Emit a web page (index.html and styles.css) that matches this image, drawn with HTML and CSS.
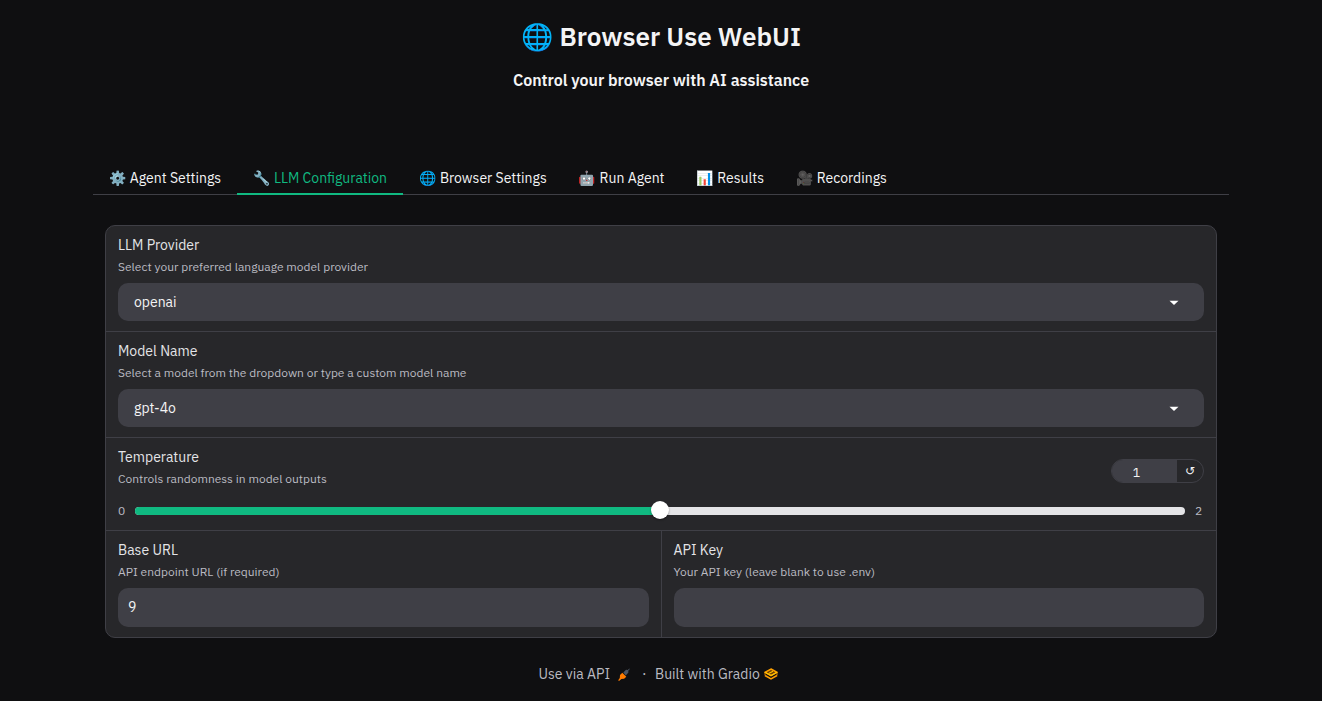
FILE: index.html
```html
<!DOCTYPE html>
<html lang="en">
<head>
<meta charset="utf-8">
<title>Browser Use WebUI</title>
<link rel="stylesheet" href="styles.css">
</head>
<body>
<header class="hero">
  <h1 class="title">🌐 Browser Use WebUI</h1>
  <h3 class="subtitle">Control your browser with AI assistance</h3>
</header>
<main class="app">
  <nav class="tabs">
    <button class="tab">⚙️ Agent Settings</button>
    <button class="tab selected">🔧 LLM Configuration</button>
    <button class="tab">🌐 Browser Settings</button>
    <button class="tab">🤖 Run Agent</button>
    <button class="tab">📊 Results</button>
    <button class="tab">🎥 Recordings</button>
  </nav>
  <section class="panel">
    <div class="block">
      <label class="label">LLM Provider</label>
      <p class="info">Select your preferred language model provider</p>
      <div class="select"><span>openai</span><svg viewBox="0 0 10 6"><path d="M.5.700h9L5 5z" fill="#fff"/></svg></div>
    </div>
    <div class="block">
      <label class="label">Model Name</label>
      <p class="info">Select a model from the dropdown or type a custom model name</p>
      <div class="select"><span>gpt-4o</span><svg viewBox="0 0 10 6"><path d="M.5.700h9L5 5z" fill="#fff"/></svg></div>
    </div>
    <div class="block block-slider">
      <div class="slider-head">
        <div><label class="label">Temperature</label><p class="info">Controls randomness in model outputs</p></div>
        <div class="number"><span class="number-value">1</span><button class="reset">↺</button></div>
      </div>
      <div class="slider"><span class="bound">0</span><div class="track"><div class="fill"></div><div class="thumb"></div></div><span class="bound">2</span></div>
    </div>
    <div class="row">
      <div class="block"><label class="label">Base URL</label><p class="info">API endpoint URL (if required)</p><div class="input">9</div></div>
      <div class="block"><label class="label">API Key</label><p class="info">Your API key (leave blank to use .env)</p><div class="input"></div></div>
    </div>
  </section>
</main>
<footer class="footer">
  <span class="f-api">Use via API</span>
  <svg class="rocket" viewBox="0 0 12 13"><path d="M5.300 4.500 8 1.800l1.800.1L11.300.6l.5.500-1.500 1.600.1 1.800L7.800 7.500z" fill="#4b5563"/><path d="m4.300 4.700 4 4-2.200 2.100-2.700.1L1 13l-.8-.7L1.800 10l.2-3z" fill="#ff7c00"/></svg>
  <span class="dot">·</span>
  <span class="f-built">Built with Gradio</span>
  <svg class="gradio" viewBox="0 0 14 12"><path d="M7 1 13 4.300 7 7.600 1 4.300z" fill="#6b3d05" stroke="#ffa000" stroke-width="1.500"/><path d="M1 7.500 7 10.900l6-3.400" fill="none" stroke="#ff9d00" stroke-width="1.600"/><path d="M1 4.300v3.200m12-3.200v3.200" fill="none" stroke="#d97b00"/><path d="M1 4.300 7 7.600l6-3.300M5 5.200 9 3.300" fill="none" stroke="#ffc400" stroke-width="1.100"/></svg>
</footer>
</body>
</html>
```
FILE: styles.css
```css
* { box-sizing: border-box; }
body { margin: 0; height: 701px; overflow: hidden; background: #0f0f11; color: #f4f4f5; font-family: "IBM Plex Sans", Roboto, "Liberation Sans", "Noto Color Emoji", sans-serif; font-size: 14px; }
h1, h3, p { margin: 0; }
button { font: inherit; color: inherit; border: 0; padding: 0; background: none; }
svg { flex: none; }
.hero { height: 162px; padding-top: 18px; display: flex; flex-direction: column; align-items: center; }
.title { height: 36px; line-height: 37px; font-size: 26px; font-weight: 600; white-space: nowrap; }
.subtitle { margin-top: 14px; line-height: 24px; font-size: 16px; font-weight: 600; white-space: nowrap; }
.app { width: 1136px; margin: 0 auto; }
.tabs { display: flex; height: 33px; border-bottom: 1px solid #3f3f46; }
.tab { height: 33px; padding: 0 16.040px 1px; white-space: nowrap; }
.selected { color: #10b981; border-bottom: 2px solid #10b981; padding-bottom: 0; }
.panel { margin: 30px 12px 0; border: 1px solid #3f3f46; border-radius: 10px; background: #27272a; overflow: hidden; }
.block { padding: 9px 12px 10px; border-bottom: 1px solid #3f3f46; height: 106px; }
.label { display: block; line-height: 20px; color: #e4e4e7; white-space: nowrap; }
.info { margin-top: 4px; line-height: 16px; font-size: 12px; color: #bbbbc2; white-space: nowrap; }
.select, .input { display: flex; align-items: center; height: 38px; margin-top: 8px; border-radius: 10px; background: #3f3f46; }
.select { padding: 0 25px 0 16px; justify-content: space-between; }
.select svg { width: 10px; height: 6px; margin-top: 2px; }
.block-slider { height: 93px; }
.slider-head { display: flex; justify-content: space-between; height: 40px; }
.number { display: flex; width: 93px; height: 24px; margin-top: 12px; border: 1px solid #3f3f46; border-radius: 12px; overflow: hidden; }
.number-value { width: 65px; padding: 1px 16px 0 0; text-align: center; font-size: 12.500px; line-height: 22px; background: #3f3f46; }
.reset { flex: 1; font: 12px/20px "DejaVu Sans", sans-serif; }
.slider { display: flex; align-items: center; height: 16px; margin-top: 16px; font-size: 12px; color: #bbbbc2; }
.bound { width: 17px; line-height: 16px; }
.bound:last-child { padding-left: 10px; width: 19px; }
.track { position: relative; flex: 1; height: 8px; border-radius: 4px; background: #e4e4e7; }
.fill { width: 50%; height: 8px; border-radius: 4px 0 0 4px; background: #10b981; }
.thumb { position: absolute; left: 516px; top: -6px; width: 18px; height: 18px; border-radius: 50%; background: #fff; box-shadow: 0 1px 2px #0006; }
.row { display: grid; grid-template-columns: 556px 1fr; }
.row .block { border-bottom: 0; height: 106px; }
.row .block:first-child { border-right: 1px solid #3f3f46; }
.row .block:last-child { padding-left: 11.500px; }
.input { height: 39px; padding: 0 10px 2px; }
.footer { display: flex; align-items: center; height: 20px; margin: 26px 0 0 538.500px; color: #bbbbc2; white-space: nowrap; }
.f-api { width: 79px; }
.rocket { width: 12px; height: 13px; margin-top: 1px; }
.dot { width: 25.500px; padding-left: 12.500px; }
.f-built { width: 109px; }
.gradio { width: 14px; height: 12px; }
```
